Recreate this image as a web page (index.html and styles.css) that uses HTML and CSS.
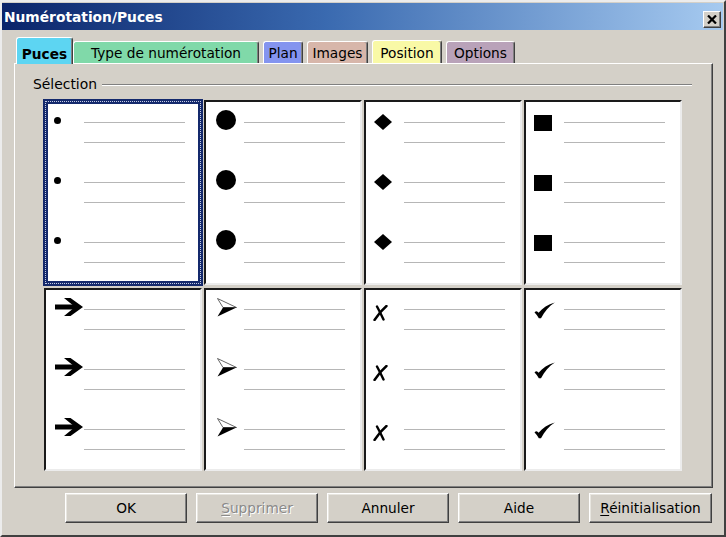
FILE: index.html
```html
<!DOCTYPE html>
<html lang="fr">
<head>
<meta charset="utf-8">
<title>Numérotation/Puces</title>
<link rel="stylesheet" href="styles.css">
</head>
<body>
<div class="dialog">
  <div class="titlebar">
    <span class="title">Numérotation/Puces</span>
    <span class="close"><svg width="10" height="9" viewBox="0 0 10 9"><path d="M1 0.5 L9 8.5 M9 0.5 L1 8.5" stroke="#000" stroke-width="2.2" fill="none"/></svg></span>
  </div>

  <div class="tabs">
    <div class="tab tab-puces active">Puces</div>
    <div class="tab tab-type">Type de numérotation</div>
    <div class="tab tab-plan">Plan</div>
    <div class="tab tab-images">Images</div>
    <div class="tab tab-position">Position</div>
    <div class="tab tab-options">Options</div>
  </div>

  <div class="panel">
    <div class="legend"><span class="legend-text">Sélection</span><span class="rule"></span></div>
    <div class="grid">
      <!-- row 1 -->
      <div class="cell selected">
        <div class="item"><span class="bbox"><span class="b dot-sm"></span></span><span class="lines"><i></i><i></i></span></div>
        <div class="item"><span class="bbox"><span class="b dot-sm"></span></span><span class="lines"><i></i><i></i></span></div>
        <div class="item"><span class="bbox"><span class="b dot-sm"></span></span><span class="lines"><i></i><i></i></span></div>
      </div>
      <div class="cell">
        <div class="item"><span class="bbox"><span class="b dot-lg"></span></span><span class="lines"><i></i><i></i></span></div>
        <div class="item"><span class="bbox"><span class="b dot-lg"></span></span><span class="lines"><i></i><i></i></span></div>
        <div class="item"><span class="bbox"><span class="b dot-lg"></span></span><span class="lines"><i></i><i></i></span></div>
      </div>
      <div class="cell">
        <div class="item"><span class="bbox"><svg class="b diamond" width="18" height="16" viewBox="0 0 18 16"><polygon points="9,0 18,8 9,16 0,8" fill="#000"/></svg></span><span class="lines"><i></i><i></i></span></div>
        <div class="item"><span class="bbox"><svg class="b diamond" width="18" height="16" viewBox="0 0 18 16"><polygon points="9,0 18,8 9,16 0,8" fill="#000"/></svg></span><span class="lines"><i></i><i></i></span></div>
        <div class="item"><span class="bbox"><svg class="b diamond" width="18" height="16" viewBox="0 0 18 16"><polygon points="9,0 18,8 9,16 0,8" fill="#000"/></svg></span><span class="lines"><i></i><i></i></span></div>
      </div>
      <div class="cell">
        <div class="item"><span class="bbox"><span class="b square"></span></span><span class="lines"><i></i><i></i></span></div>
        <div class="item"><span class="bbox"><span class="b square"></span></span><span class="lines"><i></i><i></i></span></div>
        <div class="item"><span class="bbox"><span class="b square"></span></span><span class="lines"><i></i><i></i></span></div>
      </div>
      <!-- row 2 -->
      <div class="cell row2">
        <div class="item"><span class="bbox"><svg class="b arrow" width="28" height="18" viewBox="0 0 28 18"><rect x="0" y="6.5" width="20" height="5" fill="#000"/><polygon points="9,0 15.5,0 28,9 15.5,18 9,18 20,9" fill="#000"/></svg></span><span class="lines"><i></i><i></i></span></div>
        <div class="item"><span class="bbox"><svg class="b arrow" width="28" height="18" viewBox="0 0 28 18"><rect x="0" y="6.5" width="20" height="5" fill="#000"/><polygon points="9,0 15.5,0 28,9 15.5,18 9,18 20,9" fill="#000"/></svg></span><span class="lines"><i></i><i></i></span></div>
        <div class="item"><span class="bbox"><svg class="b arrow" width="28" height="18" viewBox="0 0 28 18"><rect x="0" y="6.5" width="20" height="5" fill="#000"/><polygon points="9,0 15.5,0 28,9 15.5,18 9,18 20,9" fill="#000"/></svg></span><span class="lines"><i></i><i></i></span></div>
      </div>
      <div class="cell row2">
        <div class="item"><span class="bbox"><svg class="b head" width="20" height="19" viewBox="0 0 20 19"><polygon points="0.5,0.5 19.5,9.5 6,9.5" fill="#fff" stroke="#555" stroke-width="0.9"/><polygon points="6,9.5 19.5,9.5 0.5,18.5" fill="#000"/></svg></span><span class="lines"><i></i><i></i></span></div>
        <div class="item"><span class="bbox"><svg class="b head" width="20" height="19" viewBox="0 0 20 19"><polygon points="0.5,0.5 19.5,9.5 6,9.5" fill="#fff" stroke="#555" stroke-width="0.9"/><polygon points="6,9.5 19.5,9.5 0.5,18.5" fill="#000"/></svg></span><span class="lines"><i></i><i></i></span></div>
        <div class="item"><span class="bbox"><svg class="b head" width="20" height="19" viewBox="0 0 20 19"><polygon points="0.5,0.5 19.5,9.5 6,9.5" fill="#fff" stroke="#555" stroke-width="0.9"/><polygon points="6,9.5 19.5,9.5 0.5,18.5" fill="#000"/></svg></span><span class="lines"><i></i><i></i></span></div>
      </div>
      <div class="cell row2">
        <div class="item"><span class="bbox"><svg class="b cross" width="15" height="16" viewBox="0 0 15 16"><path d="M4 1.5 Q7 7 10.5 14.5" stroke="#000" stroke-width="2.4" fill="none" stroke-linecap="round"/><path d="M13.5 1 Q7 6.5 1.5 15" stroke="#000" stroke-width="2.4" fill="none" stroke-linecap="round"/></svg></span><span class="lines"><i></i><i></i></span></div>
        <div class="item"><span class="bbox"><svg class="b cross" width="15" height="16" viewBox="0 0 15 16"><path d="M4 1.5 Q7 7 10.5 14.5" stroke="#000" stroke-width="2.4" fill="none" stroke-linecap="round"/><path d="M13.5 1 Q7 6.5 1.5 15" stroke="#000" stroke-width="2.4" fill="none" stroke-linecap="round"/></svg></span><span class="lines"><i></i><i></i></span></div>
        <div class="item"><span class="bbox"><svg class="b cross" width="15" height="16" viewBox="0 0 15 16"><path d="M4 1.5 Q7 7 10.5 14.5" stroke="#000" stroke-width="2.4" fill="none" stroke-linecap="round"/><path d="M13.5 1 Q7 6.5 1.5 15" stroke="#000" stroke-width="2.4" fill="none" stroke-linecap="round"/></svg></span><span class="lines"><i></i><i></i></span></div>
      </div>
      <div class="cell row2">
        <div class="item"><span class="bbox"><svg class="b check" width="21" height="17" viewBox="0 0 21 17"><path d="M0.5 10.5 C2 8.8 3.2 8.8 4.6 10.8 C8.5 6 14 2.2 20.8 0.4 C15 4 10.5 9.5 7 16.3 L4.8 16.3 C3.4 13.8 2.2 12 0.5 10.5 Z" fill="#000"/></svg></span><span class="lines"><i></i><i></i></span></div>
        <div class="item"><span class="bbox"><svg class="b check" width="21" height="17" viewBox="0 0 21 17"><path d="M0.5 10.5 C2 8.8 3.2 8.8 4.6 10.8 C8.5 6 14 2.2 20.8 0.4 C15 4 10.5 9.5 7 16.3 L4.8 16.3 C3.4 13.8 2.2 12 0.5 10.5 Z" fill="#000"/></svg></span><span class="lines"><i></i><i></i></span></div>
        <div class="item"><span class="bbox"><svg class="b check" width="21" height="17" viewBox="0 0 21 17"><path d="M0.5 10.5 C2 8.8 3.2 8.8 4.6 10.8 C8.5 6 14 2.2 20.8 0.4 C15 4 10.5 9.5 7 16.3 L4.8 16.3 C3.4 13.8 2.2 12 0.5 10.5 Z" fill="#000"/></svg></span><span class="lines"><i></i><i></i></span></div>
      </div>
    </div>
  </div>

  <div class="buttons">
    <button class="btn">OK</button>
    <button class="btn disabled"><u>S</u>upprimer</button>
    <button class="btn">Annuler</button>
    <button class="btn">Aide</button>
    <button class="btn"><u>R</u>éinitialisation</button>
  </div>
</div>
</body>
</html>
```

FILE: styles.css
```css
* { box-sizing: border-box; }

html, body {
  margin: 0;
  padding: 0;
}

body {
  width: 726px;
  height: 537px;
  overflow: hidden;
  background: #d4d0c8;
  font-family: "DejaVu Sans", "Liberation Sans", sans-serif;
  font-size: 13.7px;
  color: #000;
}

.dialog {
  width: 726px;
  height: 537px;
  display: flex;
  flex-direction: column;
  background: #d4d0c8;
  border: 2px solid;
  border-color: #ececec #404040 #404040 #ececec;
  padding: 1px 1px 0 0;
}

/* ---------- title bar ---------- */
.titlebar {
  height: 27px;
  flex: none;
  display: flex;
  align-items: center;
  justify-content: space-between;
  padding: 0 2px 0 2px;
  background: linear-gradient(to right, #0a246a 0%, #3a6ab0 45%, #a6caf0 100%);
}

.title {
  color: #fff;
  font-weight: bold;
  font-size: 13.8px;
  letter-spacing: 0;
}

.close {
  width: 18px;
  height: 17px;
  margin-top: 5px;
  display: flex;
  align-items: center;
  justify-content: center;
  background: #d4d0c8;
  border: 1px solid;
  border-color: #fff #404040 #404040 #fff;
  box-shadow: inset -1px -1px #808080;
}

/* ---------- tabs ---------- */
.tabs {
  display: flex;
  align-items: flex-end;
  margin-top: 7px;
  margin-bottom: -1px;
  padding-left: 14px;
  position: relative;
  z-index: 1;
  flex: none;
}

.tab {
  height: 22px;
  margin-bottom: 1px;
  margin-right: 4px;
  display: flex;
  align-items: center;
  justify-content: center;
  border-top: 1px solid #fff;
  border-left: 1px solid #fff;
  border-right: 1px solid #404040;
  box-shadow: inset -1px 0 #808080;
  border-radius: 3px 3px 0 0;
  white-space: nowrap;
  padding-top: 1px;
}

.tab.active {
  height: 27px;
  margin-bottom: 0;
  margin-right: 0;
  font-weight: bold;
  padding-top: 5px;
}

.tab-puces    { width: 57px;  background: #5dd5f2; }
.tab-type     { width: 186px; background: #80d9a9; }
.tab-plan     { width: 40px;  background: #8494ef; }
.tab-images   { width: 61px;  background: #d7b6aa; }
.tab-position { width: 70px;  background: #f9f9a6; height: 23px; }
.tab-options  { width: 69px;  background: #b9a2b9; }

/* ---------- panel ---------- */
.panel {
  height: 425px;
  flex: none;
  margin: 0 10px 0 12px;
  border: 1px solid;
  border-color: #fff #404040 #404040 #fff;
  box-shadow: inset -1px -1px #808080;
  display: flex;
  flex-direction: column;
}

.legend {
  height: 16px;
  margin-top: 12px;
  padding-left: 18px;
  padding-right: 20px;
  display: flex;
  align-items: center;
}

.legend-text {
  font-size: 13.9px;
}

.rule {
  flex: 1;
  height: 2px;
  margin-left: 5px;
  margin-top: 1px;
  border-top: 1px solid #808080;
  border-bottom: 1px solid #fff;
}

.grid {
  margin-top: 8px;
  margin-left: 29px;
  width: 638px;
  display: grid;
  grid-template-columns: repeat(4, 158px);
  grid-template-rows: 185px 183px;
  column-gap: 2px;
  row-gap: 3px;
}

.cell {
  background: #fff;
  border: 2px solid;
  border-color: #1a1a1a #ececec #ececec #1a1a1a;
  padding-top: 10px;
  position: relative;
}

.cell.row2 {
  padding-top: 9px;
}

.cell.selected::after {
  content: "";
  position: absolute;
  top: -3px;
  left: -3px;
  right: -3px;
  bottom: -3px;
  border: 5px solid #14296c;
  outline: 1px dotted #c4cbe4;
  outline-offset: -3px;
}

.item {
  height: 60px;
  display: flex;
  align-items: flex-start;
}

.bbox {
  width: 38px;
  height: 20px;
  flex: none;
  display: flex;
  align-items: flex-start;
}

.b { display: block; flex: none; }

.dot-sm {
  width: 7px;
  height: 7px;
  border-radius: 50%;
  background: #000;
  margin: 5px 0 0 8px;
}

.dot-lg {
  width: 20px;
  height: 20px;
  border-radius: 50%;
  background: #000;
  margin: -2px 0 0 10px;
}

.diamond { margin: 2px 0 0 8px; }

.square {
  width: 18px;
  height: 16px;
  background: #000;
  margin: 3px 0 0 8px;
}

.arrow { margin: -1px 0 0 9px; }
.head  { margin: -1px 0 0 11px; }
.cross { margin: 6px 0 0 7px; }
.check { margin: 3px 0 0 8px; }

.lines {
  width: 101px;
  padding-top: 10px;
  flex: none;
}

.lines i {
  display: block;
  height: 1px;
  background: #b6b6b6;
  margin-bottom: 19px;
}

/* ---------- buttons ---------- */
.buttons {
  display: flex;
  justify-content: flex-end;
  gap: 9px;
  margin: 5px 11px 0 0;
  flex: none;
}

.btn {
  width: 122px;
  height: 30px;
  padding: 0;
  font-family: "DejaVu Sans", "Liberation Sans", sans-serif;
  font-size: 13.7px;
  color: #000;
  background: #d4d0c8;
  border: 1px solid;
  border-color: #fff #404040 #404040 #fff;
  box-shadow: inset -1px -1px #808080, inset 1px 1px #e8e6e0;
  border-radius: 0;
}

.btn:last-child { width: 123px; }

.btn u { text-decoration-thickness: 1px; text-underline-offset: 2px; }

.btn.disabled {
  color: #8a8a8a;
  text-shadow: 1px 1px 0 #fff;
}
```
